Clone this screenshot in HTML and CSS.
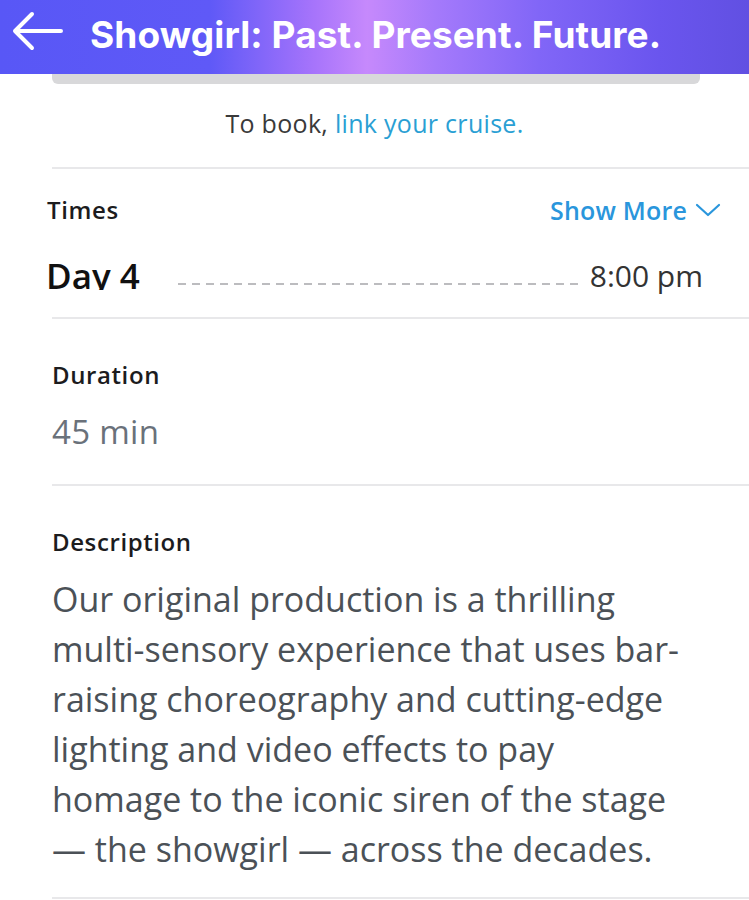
FILE: index.html
```html
<!DOCTYPE html>
<html lang="en">
<head>
<meta charset="utf-8">
<title>Showgirl: Past. Present. Future.</title>
<link rel="stylesheet" href="styles.css">
</head>
<body>
<header class="header">
  <svg class="back" width="52" height="40" viewBox="0 0 52 40" aria-hidden="true">
    <path d="M49 20 H3 M20 3 L3 20 L20 37" fill="none" stroke="#fff" stroke-width="4" stroke-linecap="round" stroke-linejoin="round"/>
  </svg>
  <h1 class="title">Showgirl: Past. Present. Future.</h1>
</header>
<div class="tab-bar"></div>
<p class="book">To book, <a class="link" href="#">link your cruise.</a></p>
<section class="section times">
  <div class="times-head">
    <h2 class="label">Times</h2>
    <a class="more" href="#">Show More
      <svg class="chev" width="26" height="16" viewBox="0 0 26 16" aria-hidden="true">
        <path d="M2 3 L13 13 L24 3" fill="none" stroke="#2a96dc" stroke-width="2.2" stroke-linecap="round" stroke-linejoin="round"/>
      </svg>
    </a>
  </div>
  <div class="time-row">
    <span class="day">Day 4</span>
    <span class="dots"></span>
    <span class="hour">8:00 pm</span>
  </div>
</section>
<section class="section duration">
  <h2 class="label">Duration</h2>
  <p class="value">45 min</p>
</section>
<section class="section desc">
  <h2 class="label">Description</h2>
  <p class="text">Our original production is a thrilling<br>multi-sensory experience that uses bar-<br>raising choreography and cutting-edge<br>lighting and video effects to pay<br>homage to the iconic siren of the stage<br>— the showgirl — across the decades.</p>
</section>
</body>
</html>
```
FILE: styles.css
```css
* { box-sizing: border-box; }
html, body { margin: 0; padding: 0; background: #fff; }
body {
  font-family: "Open Sans", "Liberation Sans", sans-serif;
  color: #222;
  overflow: hidden;
  height: 900px;
  font-variant-ligatures: none;
}
.header {
  height: 74px;
  display: flex;
  align-items: center;
  padding-left: 12px;
  background: linear-gradient(90deg, #5857f6 0%, #5f59f7 28%, #a774fb 42%, #c689fc 49%, #a57afb 58%, #8166f7 72%, #6a55ee 88%, #6150e2 100%);
}
.back { flex: none; align-self: flex-start; margin-top: 11px; margin-right: 26px; }
.title {
  margin: 0 0 6px;
  color: #fff;
  font-family: "Inter", "Liberation Sans", sans-serif;
  font-weight: 700;
  font-size: 37px;
  letter-spacing: 0.1px;
  white-space: nowrap;
}
.tab-bar {
  height: 10px;
  margin: 0 49px 0 52px;
  background: #d8d8da;
  border-radius: 0 0 6px 6px;
}
.book {
  margin: 0;
  padding: 24px 0 29px;
  line-height: 30px;
  text-align: center;
  font-size: 25px;
  color: #3a3a3a;
  letter-spacing: 0.3px;
}
.link { color: #2a9fd4; text-decoration: none; }
.section {
  margin-left: 52px;
  border-top: 2px solid #e8e8ea;
}
.label {
  margin: 0;
  font-size: 24px;
  line-height: 30px;
  font-weight: 600;
  color: #1c1c1e;
  letter-spacing: 0.6px;
}
.times { padding: 26px 28px 21px 0; }
.times-head {
  display: flex;
  justify-content: space-between;
  align-items: center;
  margin-left: -5px;
}
.more {
  display: flex;
  align-items: center;
  gap: 8px;
  color: #2a96dc;
  text-decoration: none;
  font-size: 25px;
  line-height: 30px;
  font-weight: 600;
  letter-spacing: 0.2px;
}
.time-row {
  display: flex;
  align-items: center;
  margin-top: 31px;
  margin-left: -6px;
  margin-right: 18px;
  height: 40px;
}
.day {
  font-size: 35px;
  font-weight: 600;
  color: #111;
  line-height: 40px;
  height: 34px;
  overflow: hidden;
  align-self: flex-start;
}
.dots {
  flex: 1;
  margin: 16px 12px 0 38px;
  height: 2px;
  background: repeating-linear-gradient(90deg, #bcbcbf 0 8px, transparent 8px 14px);
}
.hour { font-size: 30px; line-height: 40px; color: #333; }
.duration { padding: 41px 0 32px; }
.value {
  margin: 22px 0 0;
  font-size: 33px;
  line-height: 40px;
  color: #6a717a;
  letter-spacing: 0.3px;
}
.desc { padding: 41px 0 23px; border-bottom: 2px solid #e8e8ea; }
.text {
  margin: 17px 0 0;
  font-size: 34px;
  line-height: 50px;
  color: #4b5157;
  white-space: nowrap;
}
```
